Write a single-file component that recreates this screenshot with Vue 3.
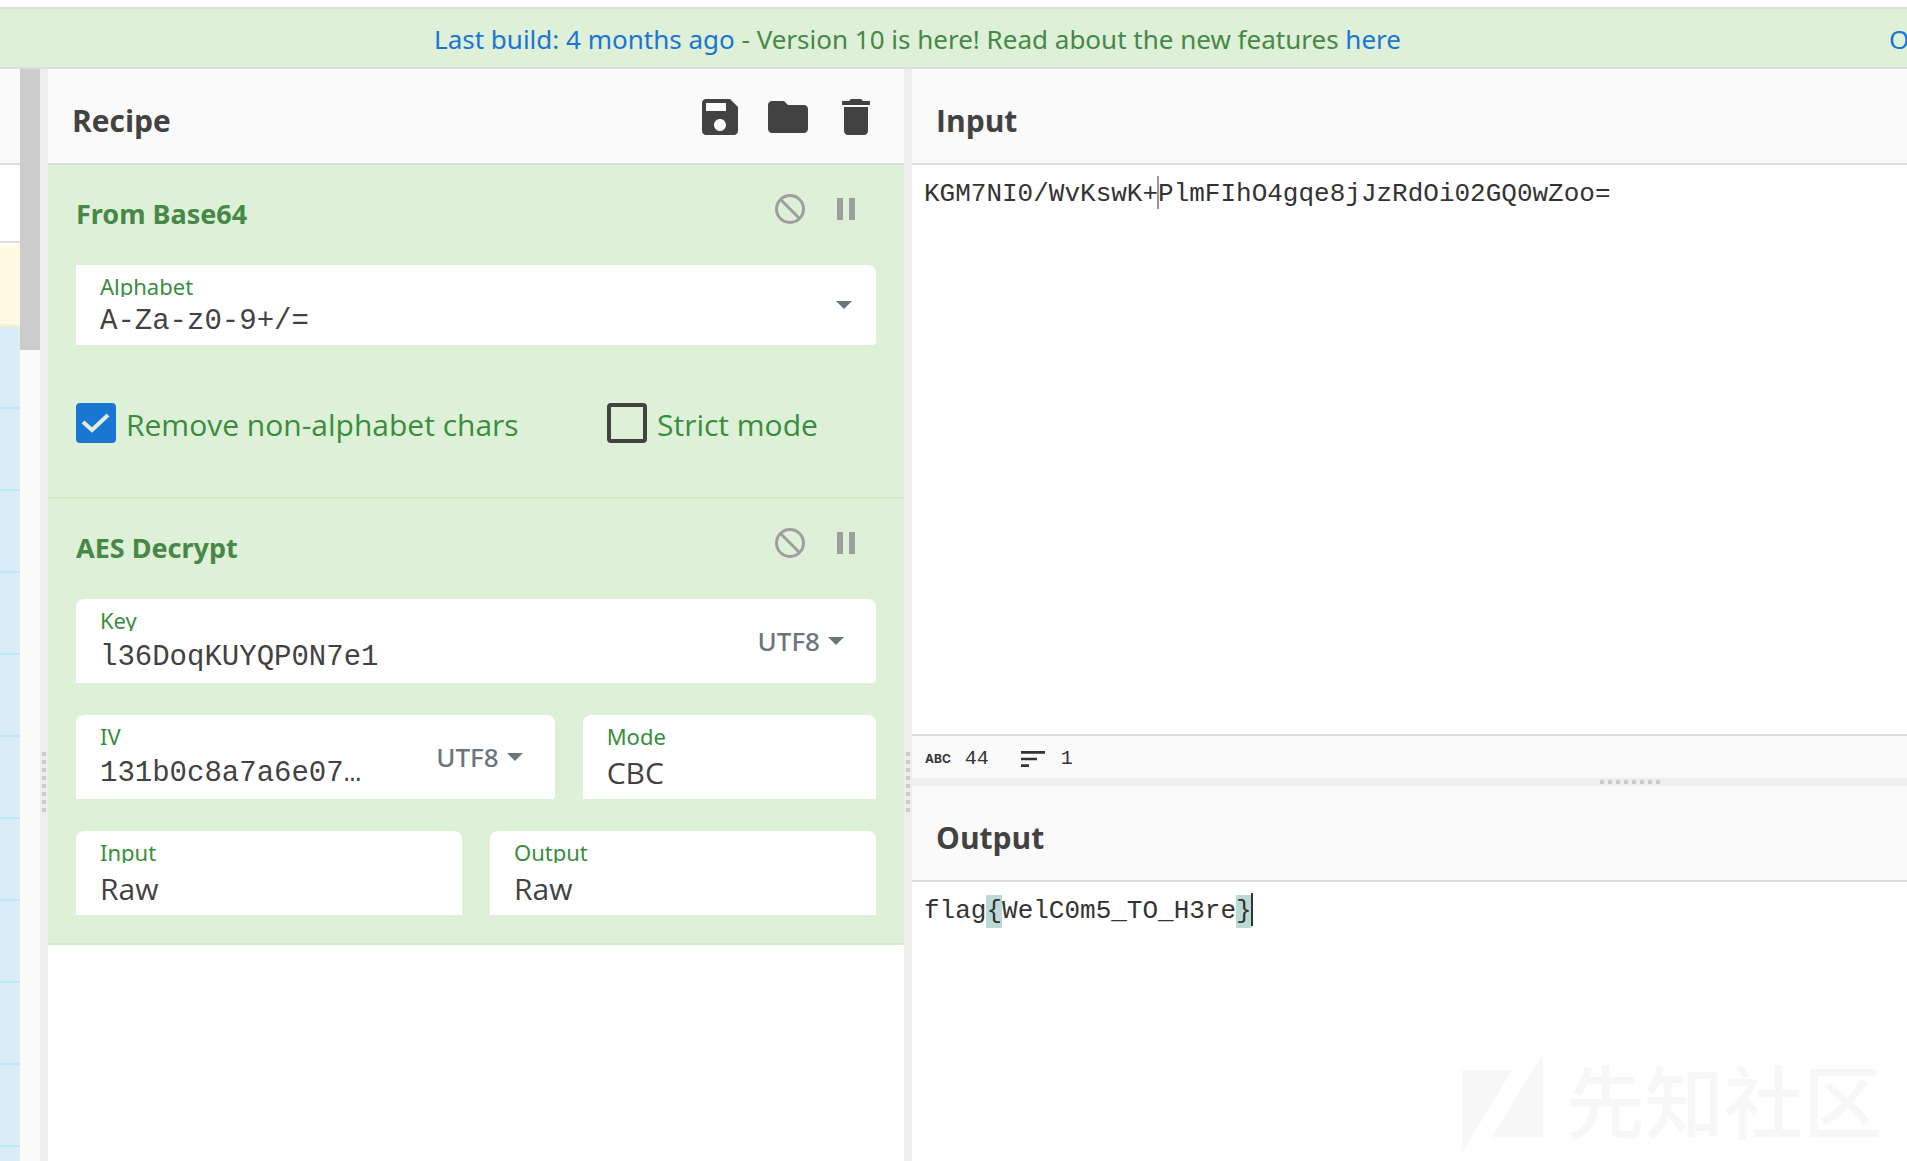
<script setup>
import { ref } from 'vue'

const alphabet = ref('A-Za-z0-9+/=')
const removeNonAlphabet = ref(true)
const strictMode = ref(false)
const key = ref('l36DoqKUYQP0N7e1')
const iv = ref('131b0c8a7a6e07…')
const mode = ref('CBC')
const inputFormat = ref('Raw')
const outputFormat = ref('Raw')
</script>

<template>
  <div class="app">
    <header class="banner">
      <p class="notice">
        <a href="#build">Last build: 4 months ago</a> - Version 10 is here! Read about the new features <a href="#features">here</a>
      </p>
      <a class="options" href="#options">O</a>
    </header>

    <main class="workspace">
      <aside class="operations" aria-label="Operations">
        <div class="ops-title"></div>
        <div class="ops-search"></div>
        <div class="ops-favourite"></div>
        <div v-for="n in 11" :key="n" class="ops-item"></div>
      </aside>
      <div class="scrollbar"><div class="thumb"></div></div>
      <div class="gutter vertical"><span class="grip"></span></div>

      <section class="recipe" aria-labelledby="recipe-title">
        <div class="title">
          <h2 id="recipe-title">Recipe</h2>
          <div class="tools">
            <button type="button" aria-label="Save recipe">
              <svg viewBox="0 0 24 24"><path d="M17 3H5c-1.11 0-2 .9-2 2v14c0 1.1.89 2 2 2h14c1.1 0 2-.9 2-2V7l-4-4zm-5 16c-1.66 0-3-1.34-3-3s1.34-3 3-3 3 1.34 3 3-1.34 3-3 3zm3-10H5V5h10v4z" /></svg>
            </button>
            <button type="button" aria-label="Load recipe">
              <svg viewBox="0 0 24 24"><path d="M10 4H4c-1.1 0-1.99.9-1.99 2L2 18c0 1.1.9 2 2 2h16c1.1 0 2-.9 2-2V8c0-1.1-.9-2-2-2h-8l-2-2z" /></svg>
            </button>
            <button type="button" aria-label="Clear recipe">
              <svg viewBox="0 0 24 24"><path d="M6 19c0 1.1.9 2 2 2h8c1.1 0 2-.9 2-2V7H6v12zM19 4h-3.500l-1-1h-5l-1 1H5v2h14V4z" /></svg>
            </button>
          </div>
        </div>

        <article class="operation">
          <div class="op-head">
            <h3>From Base64</h3>
            <div class="op-tools">
              <button type="button" aria-label="Disable operation">
                <svg viewBox="0 0 30 30"><g fill="none" stroke="#9e9e9e" stroke-width="3"><circle cx="15" cy="15" r="13.500" /><path d="M5.500 5.500l19 19" /></g></svg>
              </button>
              <button type="button" aria-label="Set breakpoint">
                <svg viewBox="0 0 30 30"><path fill="#9e9e9e" d="M6 4h6v22H6zM18 4h6v22h-6z" /></svg>
              </button>
            </div>
          </div>
          <div class="field short">
            <label for="alphabet">Alphabet</label>
            <input id="alphabet" v-model="alphabet" class="mono" type="text" />
            <button class="toggle" type="button" aria-label="Alphabet presets"><span class="caret"></span></button>
          </div>
          <div class="checks">
            <label class="check"><input v-model="removeNonAlphabet" type="checkbox" /><span class="box"><svg viewBox="0 0 40 40"><path d="M7 19l9 8L32 12" /></svg></span><span class="check-text">Remove non-alphabet chars</span></label>
            <label class="check"><input v-model="strictMode" type="checkbox" /><span class="box"><svg viewBox="0 0 40 40"><path d="M7 19l9 8L32 12" /></svg></span><span class="check-text">Strict mode</span></label>
          </div>
        </article>

        <article class="operation">
          <div class="op-head">
            <h3>AES Decrypt</h3>
            <div class="op-tools">
              <button type="button" aria-label="Disable operation">
                <svg viewBox="0 0 30 30"><g fill="none" stroke="#9e9e9e" stroke-width="3"><circle cx="15" cy="15" r="13.500" /><path d="M5.500 5.500l19 19" /></g></svg>
              </button>
              <button type="button" aria-label="Set breakpoint">
                <svg viewBox="0 0 30 30"><path fill="#9e9e9e" d="M6 4h6v22H6zM18 4h6v22h-6z" /></svg>
              </button>
            </div>
          </div>
          <div class="fields">
            <div class="field">
              <label for="key">Key</label>
              <input id="key" v-model="key" class="mono" type="text" />
              <button class="toggle" type="button">UTF8<span class="caret"></span></button>
            </div>
            <div class="row wide-first">
              <div class="field">
                <label for="iv">IV</label>
                <input id="iv" v-model="iv" class="mono" type="text" />
                <button class="toggle" type="button">UTF8<span class="caret"></span></button>
              </div>
              <div class="field plain">
                <label for="mode">Mode</label>
                <select id="mode" v-model="mode"><option>CBC</option></select>
              </div>
            </div>
            <div class="row">
              <div class="field plain">
                <label for="input-format">Input</label>
                <select id="input-format" v-model="inputFormat"><option>Raw</option></select>
              </div>
              <div class="field plain">
                <label for="output-format">Output</label>
                <select id="output-format" v-model="outputFormat"><option>Raw</option></select>
              </div>
            </div>
          </div>
        </article>
      </section>

      <div class="gutter vertical"><span class="grip"></span></div>

      <div class="io">
        <section class="pane input-pane">
          <div class="title"><h2 id="input-title">Input</h2></div>
          <div class="editor" role="textbox" contenteditable="true" spellcheck="false" aria-labelledby="input-title">KGM7NI0/WvKswK+<span class="cursor idle"></span>PlmFIhO4gqe8jJzRdOi02GQ0wZoo=</div>
          <div class="status">
            <span class="abc">ABC</span>
            <span class="count">44</span>
            <svg viewBox="0 0 24 24" aria-hidden="true"><path d="M3 18h6v-2H3v2zM3 6v2h18V6H3zm0 7h12v-2H3v2z" /></svg>
            <span class="count">1</span>
          </div>
        </section>
        <div class="gutter horizontal"><span class="grip"></span></div>
        <section class="pane output-pane">
          <div class="title"><h2 id="output-title">Output</h2></div>
          <div class="editor" role="textbox" aria-readonly="true" aria-labelledby="output-title">flag<mark>{</mark>WelC0m5_TO_H3re<mark>}</mark><span class="cursor"></span></div>
        </section>
      </div>
    </main>

    <div class="watermark">
      <svg viewBox="0 0 82 100" aria-hidden="true"><path d="M0 17h50L0 100zM81 0v84H30z" /></svg>
      <span>先知社区</span>
    </div>
  </div>
</template>

<style>
body {
  margin: 0;
}
</style>

<style scoped>
.app {
  position: relative;
  display: flex;
  flex-direction: column;
  height: 100vh;
  box-sizing: border-box;
  padding-top: 7px;
  overflow: hidden;
  background: #fff;
  color: #424242;
  font-family: "Open Sans", "Noto Sans", sans-serif;
}

button {
  display: flex;
  align-items: center;
  padding: 0;
  border: 0;
  background: none;
  font-family: inherit;
  cursor: pointer;
}

/* Banner */
.banner {
  display: flex;
  flex: none;
  align-items: center;
  height: 56px;
  padding-top: 2px;
  border-top: 2px solid #ddd;
  border-bottom: 2px solid #ddd;
  background: #dff0d8;
  color: #468847;
  font-family: "Noto Sans", sans-serif;
  font-size: 26px;
  line-height: 36px;
  white-space: nowrap;
}

.banner a {
  color: #1976d2;
  text-decoration: none;
}

.notice {
  flex: 1;
  margin: 0;
  padding-right: 54px;
  text-align: center;
}

.options {
  flex: none;
  width: 18px;
  overflow: hidden;
}

/* Columns */
.workspace {
  display: grid;
  flex: 1;
  grid-template-columns: 20px 20px 8px minmax(0, 856fr) 8px minmax(0, 995fr);
  min-height: 0;
}

.operations {
  overflow: hidden;
  background: #d9edf7;
}

.operations > div {
  box-sizing: border-box;
}

.ops-title {
  height: 96px;
  border-bottom: 2px solid #ddd;
  background: #fafafa;
}

.ops-search {
  height: 78px;
  border-bottom: 2px solid #ddd;
  background: #fff;
}

.ops-favourite {
  height: 84px;
  border-top: 2px solid #fff;
  border-bottom: 2px solid #fbeed0;
  background: #fffae3;
}

.ops-item {
  height: 82px;
  border-bottom: 2px solid #bce8fa;
}

.scrollbar {
  background: #fafafa;
}

.thumb {
  height: 281px;
  background: #ccc;
}

.gutter {
  display: flex;
  align-items: center;
  background: #eee;
}

.gutter::before,
.gutter::after {
  content: "";
}

.vertical {
  flex-direction: column;
}

.vertical::before {
  flex: 683;
}

.vertical::after {
  flex: 349;
}

.vertical .grip {
  width: 4px;
  height: 60px;
  background: repeating-linear-gradient(to bottom, #ccc 0 4px, transparent 4px 8px);
}

.horizontal {
  flex: none;
  height: 8px;
}

.horizontal::before {
  flex: 688;
}

.horizontal::after {
  flex: 247;
}

.horizontal .grip {
  width: 60px;
  height: 4px;
  background: repeating-linear-gradient(to right, #ccc 0 4px, transparent 4px 8px);
}

.title {
  display: flex;
  flex: none;
  align-items: center;
  justify-content: space-between;
  height: 92px;
  padding: 2px 24px 0;
  border-bottom: 2px solid #ddd;
  background: #fafafa;
}

h2 {
  margin: 0;
  padding-top: 8px;
  font-size: 30px;
  line-height: 40px;
}

.tools {
  display: flex;
  gap: 20px;
}

.tools svg {
  display: block;
  width: 48px;
  height: 48px;
  fill: #424242;
}

/* Recipe */
.operation {
  padding: 0 28px 28px;
  border-bottom: 2px solid #d6e9c6;
  background: #dff0d8;
}

.op-head {
  display: flex;
  justify-content: space-between;
  height: 100px;
}

h3 {
  margin: 0;
  padding-top: 29px;
  color: #468847;
  font-family: "Noto Sans", sans-serif;
  font-size: 27px;
  line-height: 40px;
}

.op-tools {
  display: flex;
  align-items: flex-start;
  gap: 26px;
  padding: 29px 15px 0 0;
}

.op-tools svg {
  display: block;
  width: 30px;
  height: 30px;
}

.fields {
  display: grid;
  gap: 32px;
}

.row {
  display: grid;
  grid-template-columns: 1fr 1fr;
  gap: 28px;
}

.wide-first {
  grid-template-columns: minmax(0, 62fr) minmax(0, 38fr);
}

.field {
  display: grid;
  grid-template-columns: minmax(0, 1fr) auto;
  grid-template-rows: 32px 52px;
  border-radius: 8px 8px 4px 0;
  background: #fff;
}

.short {
  grid-template-rows: 32px 48px;
  border-top-left-radius: 0;
}

.plain {
  grid-template-columns: minmax(0, 1fr);
  border-bottom-right-radius: 0;
}

.field label {
  height: 24px;
  padding: 8px 0 0 24px;
  overflow: hidden;
  color: #388e3c;
  font-family: "Noto Sans", sans-serif;
  font-size: 22px;
  line-height: 26px;
}

.field input,
.field select {
  appearance: none;
  min-width: 0;
  margin: 0;
  padding: 0 0 0 24px;
  border: 0;
  background: none;
  color: #424242;
  font-family: inherit;
  font-size: 30px;
}

.field select {
  padding-bottom: 2px;
}

.field .mono {
  font-family: "Liberation Mono", monospace;
  font-size: 29px;
}

.toggle {
  grid-row: 1 / 3;
  grid-column: 2;
  gap: 8px;
  padding-right: 32px;
  color: #6c757d;
  font-family: "Noto Sans", sans-serif;
  font-size: 26px;
  font-weight: 500;
}

.short .toggle {
  padding-right: 24px;
}

.caret {
  border: 8px solid transparent;
  border-top-color: #6c757d;
  border-bottom: 0;
}

.checks {
  display: grid;
  grid-template-columns: 531fr 269fr;
  padding: 58px 0 26px;
}

.check {
  display: flex;
  position: relative;
  align-items: flex-start;
  gap: 10px;
  height: 40px;
  color: #388e3c;
  font-size: 30px;
  line-height: 40px;
  white-space: nowrap;
}

.check-text {
  padding-top: 2px;
}

.check input {
  position: absolute;
  width: 40px;
  height: 40px;
  margin: 0;
  opacity: 0;
}

.box {
  box-sizing: border-box;
  width: 40px;
  height: 40px;
  border: 4px solid #424242;
  border-radius: 4px;
}

.box svg {
  display: none;
  width: 40px;
  height: 40px;
  margin: -4px;
  fill: none;
  stroke: #dff0d8;
  stroke-width: 4;
}

.check input:checked + .box {
  border-color: #1976d2;
  background: #1976d2;
}

.check input:checked + .box svg {
  display: block;
}

/* Input and output */
.io {
  display: flex;
  flex-direction: column;
  min-height: 0;
}

.pane {
  display: flex;
  flex-direction: column;
  min-height: 0;
}

.input-pane {
  flex: 709 1 0;
}

.output-pane {
  flex: 375 1 0;
}

.editor {
  flex: 1;
  padding: 11px 12px;
  outline: 0;
  color: #333;
  font-family: "Liberation Mono", monospace;
  font-size: 26px;
  line-height: 36px;
}

mark {
  display: inline-block;
  background: #bbdad5;
  color: inherit;
  line-height: 33px;
}

.cursor {
  display: inline-block;
  width: 2px;
  height: 33px;
  margin: 0 -1px;
  background: #333;
  vertical-align: top;
}

.idle {
  background: #999;
}

.status {
  display: flex;
  align-items: center;
  height: 42px;
  padding-left: 13px;
  border-top: 2px solid #ddd;
  background: #fafafa;
  color: #333;
  font-family: "Liberation Mono", monospace;
  font-size: 20px;
}

.status svg {
  width: 32px;
  height: 32px;
  margin: 4px 12px 0 28px;
  fill: #333;
}

.count {
  padding-top: 2px;
}

.abc {
  margin: 2px 14px 0 0;
  font-family: Inter, sans-serif;
  font-size: 12px;
  font-weight: 700;
}

.watermark {
  display: flex;
  position: absolute;
  right: 25px;
  bottom: 8px;
  align-items: center;
  gap: 22px;
  color: #f7f7f7;
  font-family: "Noto Sans CJK SC", sans-serif;
  font-size: 79px;
  font-weight: 500;
  line-height: 92px;
  pointer-events: none;
}

.watermark svg {
  width: 82px;
  height: 100px;
  fill: #f7f7f7;
}

.watermark span {
  padding-bottom: 8px;
}
</style>
